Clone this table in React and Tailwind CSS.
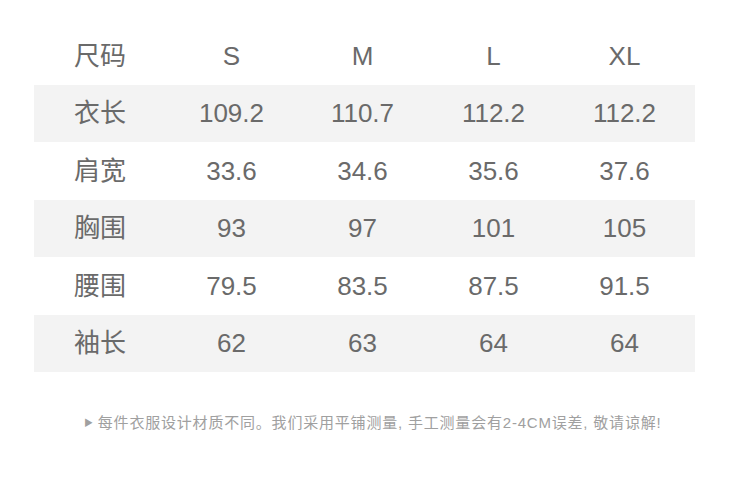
const sizes = ['S', 'M', 'L', 'XL'];

const rows = [
  { label: '衣长', values: ['109.2', '110.7', '112.2', '112.2'] },
  { label: '肩宽', values: ['33.6', '34.6', '35.6', '37.6'] },
  { label: '胸围', values: ['93', '97', '101', '105'] },
  { label: '腰围', values: ['79.5', '83.5', '87.5', '91.5'] },
  { label: '袖长', values: ['62', '63', '64', '64'] },
];

const font = { fontFamily: '"Liberation Sans", "Noto Sans CJK SC", sans-serif' };

const Row = ({ label, values, shaded, tall }) => (
  <div
    className={`grid grid-cols-[132px_131px_131px_131px_131px] items-center text-[26px] text-[#6a6a6a] ${shaded ? 'bg-[#f3f3f3]' : ''} ${tall ? 'h-[58px]' : 'h-[57px]'}`}
  >
    <div className="text-center">{label}</div>
    {values.map((v, i) => (
      <div key={i} className="text-center">{v}</div>
    ))}
  </div>
);

export default function App() {
  return (
    <div className="w-[750px] h-[491px] bg-white pt-[28px]" style={font}>
      <div className="ml-[34px] w-[661px]">
        <Row label="尺码" values={sizes} />
        {rows.map((r, i) => (
          <Row key={r.label} label={r.label} values={r.values} shaded={i % 2 === 0} tall={i % 2 === 1} />
        ))}
      </div>
      <div className="mt-[40px] ml-[84px] flex items-center gap-[4px] text-[15px] tracking-[0.8px] text-[#a0a0a0]">
        <span className="text-[9px]">▶</span>
        <span>每件衣服设计材质不同。我们采用平铺测量, 手工测量会有2-4CM误差, 敬请谅解!</span>
      </div>
    </div>
  );
}
